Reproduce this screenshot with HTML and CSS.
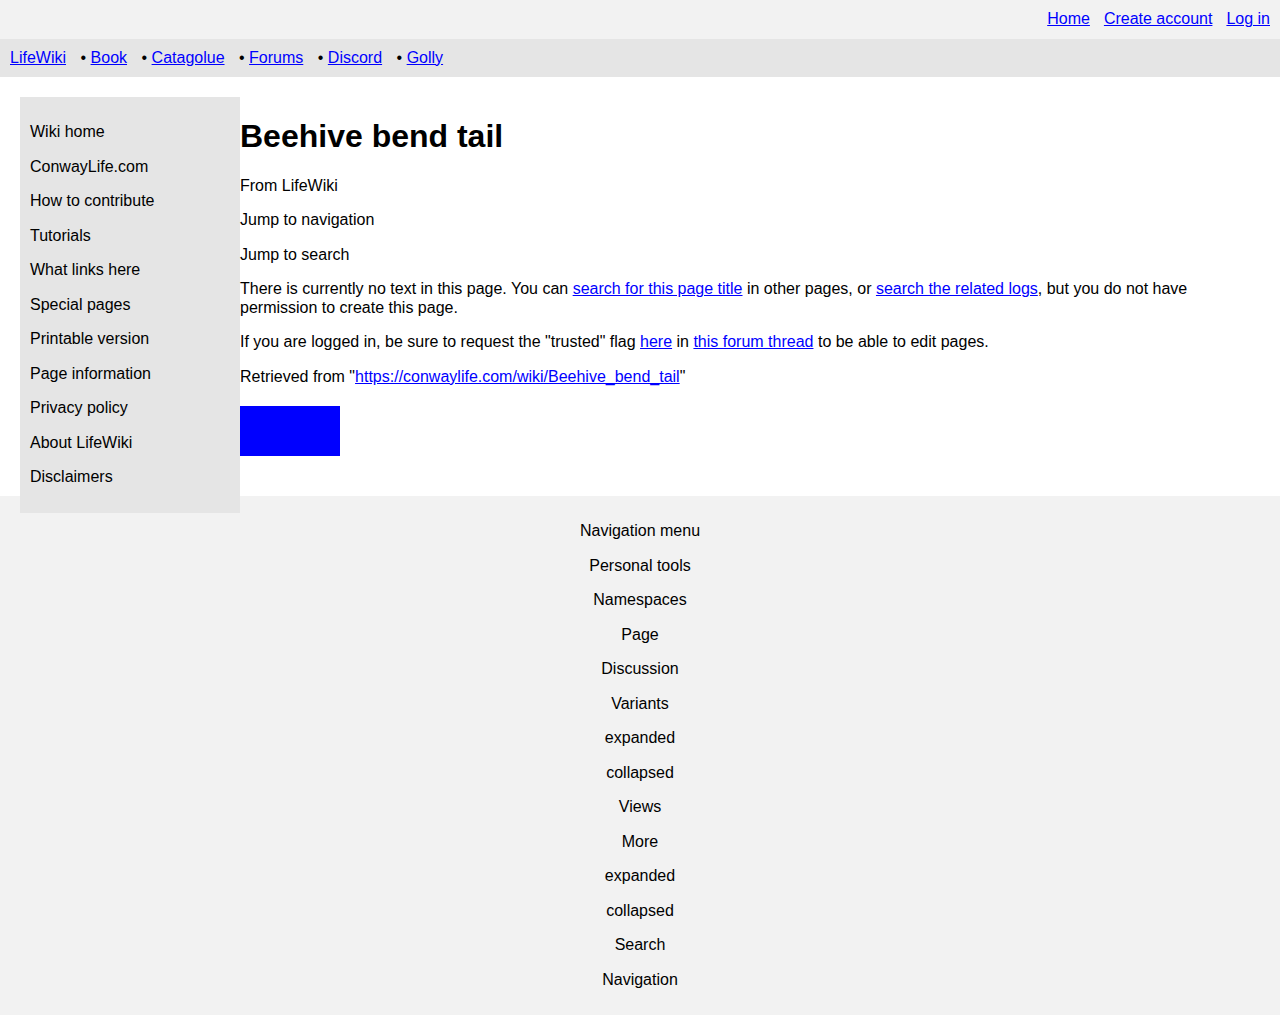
FILE: index.html
```html
<!DOCTYPE html>
<html lang="en">
<head>
<meta charset="utf-8">
<title>Beehive bend tail - LifeWiki</title>
<link rel="stylesheet" href="styles.css">
</head>
<body>
<div class="personal">
  <a href="#">Home</a>
  <a href="#">Create account</a>
  <a href="#">Log in</a>
</div>
<ul class="sitenav">
  <li><a href="#">LifeWiki</a></li>
  <li class="sep"><a href="#">Book</a></li>
  <li class="sep"><a href="#">Catagolue</a></li>
  <li class="sep"><a href="#">Forums</a></li>
  <li class="sep"><a href="#">Discord</a></li>
  <li class="sep"><a href="#">Golly</a></li>
</ul>
<div class="wrap">
  <div class="sidebar">
    <p>Wiki home</p>
    <p>ConwayLife.com</p>
    <p>How to contribute</p>
    <p>Tutorials</p>
    <p>What links here</p>
    <p>Special pages</p>
    <p>Printable version</p>
    <p>Page information</p>
    <p>Privacy policy</p>
    <p>About LifeWiki</p>
    <p>Disclaimers</p>
  </div>
  <div class="main">
    <h1>Beehive bend tail</h1>
    <p>From LifeWiki</p>
    <p>Jump to navigation</p>
    <p>Jump to search</p>
    <p>There is currently no text in this page. You can <a href="#">search for this page title</a> in other pages, or <a href="#">search the related logs</a>, but you do not have permission to create this page.</p>
    <p>If you are logged in, be sure to request the "trusted" flag <a href="#">here</a> in <a href="#">this forum thread</a> to be able to edit pages.</p>
    <p>Retrieved from "<a href="#">https://conwaylife.com/wiki/Beehive_bend_tail</a>"</p>
    <div class="badge"></div>
  </div>
</div>
<div class="footer">
  <p>Navigation menu</p>
  <p>Personal tools</p>
  <p>Namespaces</p>
  <p>Page</p>
  <p>Discussion</p>
  <p>Variants</p>
  <p>expanded</p>
  <p>collapsed</p>
  <p>Views</p>
  <p>More</p>
  <p>expanded</p>
  <p>collapsed</p>
  <p>Search</p>
  <p>Navigation</p>
</div>
</body>
</html>
```
FILE: styles.css
```css
html, body {
  margin: 0;
  padding: 0;
}
body {
  font-family: "Liberation Sans", Arial, sans-serif;
  font-size: 16px;
  line-height: 18.5px;
  color: #000;
  background: #fff;
}
a {
  color: #0000ff;
  text-decoration: underline;
}
.personal {
  background: #f2f2f2;
  display: flex;
  justify-content: flex-end;
  gap: 14px;
  padding: 10px 10px;
}
.sitenav {
  list-style: none;
  margin: 0;
  background: #e5e5e5;
  display: flex;
  gap: 14.5px;
  padding: 10px 10px;
}
.sitenav .sep::before {
  content: "\2022\00a0";
}
.wrap {
  padding: 20px;
}
.sidebar {
  float: left;
  width: 200px;
  background: #e5e5e5;
  padding: 10px;
}
.sidebar p,
.main p,
.footer p {
  margin: 16px 0;
}
.main {
  margin-left: 220px;
  display: flow-root;
}
.main h1 {
  font-size: 32px;
  font-weight: bold;
  line-height: 37px;
  margin: 21.44px 0;
}
.badge {
  width: 100px;
  height: 50px;
  background: #0000ff;
  margin: 20px 0;
}
.footer {
  background: #f2f2f2;
  text-align: center;
  padding: 10px 0;
}
```
